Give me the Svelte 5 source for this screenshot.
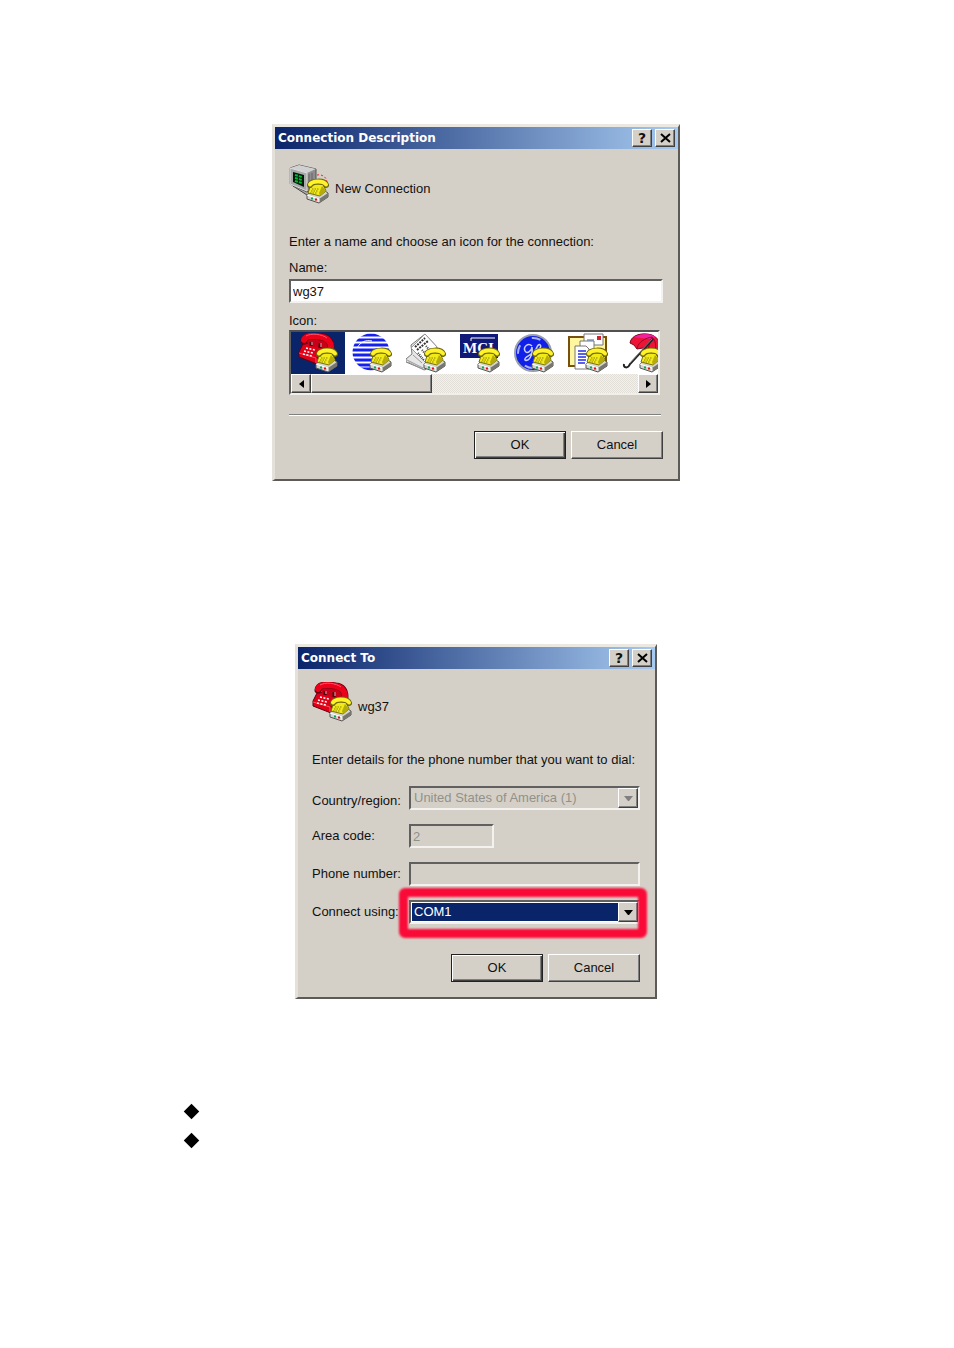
<script>
    let name = "wg37";
    let areaCode = "2";
    let phoneNumber = "";
    let country = "United States of America (1)";
    let port = "COM1";
    let selectedIcon = 0;

    const icons = ["Phone", "Globe", "Newspaper", "MCI", "GE", "Mail", "Umbrella"];
    const ports = ["COM1", "COM2", "TCP/IP (Winsock)"];
    const stripes = [2, 7, 12, 17, 22, 27, 32, 36];
</script>

{#snippet yellowPhone()}
    <path d="M18 31L22 27H36L39 29V33L30 39L18 35Z" fill="#d4d4d0" stroke="#555" />
    <path d="M30 35L39 29V33L30 39Z" fill="#77776f" />
    <path d="M18 31L30 35V38" fill="none" stroke="#fff" />
    <path d="M22 34.5h2" stroke="#0a5" stroke-width="2" />
    <path d="M26 35.5h2" stroke="#e01010" stroke-width="2" />
    <path d="M22 20H34L37 27L31 32L19 29Z" fill="#f2ea18" stroke="#77720c" />
    <path d="M33 22L37 27L31 32L30 29Z" fill="#b5ac0c" />
    <path d="M23 25h7M22 27h7M21 29h7" stroke="#8a8410" stroke-dasharray="1.5 1" />
    <path d="M21 21C22 17 35 16 37 21" fill="none" stroke="#6b6610" stroke-width="6" stroke-linecap="round" />
    <path d="M21 20.500C23 17 34 16 37 20.500" fill="none" stroke="#fff22a" stroke-width="4" stroke-linecap="round" />
{/snippet}

{#snippet redPhone()}
    <path d="M5 11L25 9L31 18L29 23L19 31L1 24V19Z" fill="#e00018" stroke="#600010" />
    <path d="M18 25L29 17V23L19 31Z" fill="#a00020" />
    <path d="M8 5H28L31 18L20 15L10 12Z" fill="#c80018" />
    <path d="M1 20L18 25V30" fill="none" stroke="#ff5060" />
    <path d="M8 15l9 2M6 18l9 2M5 21l9 2" stroke="#fff" stroke-dasharray="2 1.500" stroke-width="1.500" />
    <path d="M13 13V9M22 15V10" stroke="#500010" stroke-width="3" />
    <path d="M14 12V9M23 14V10" stroke="#ffb0b0" />
    <path d="M6 8C7 1 18 3 24 4C31 5 33 10 33 15" fill="none" stroke="#680014" stroke-width="7" stroke-linecap="round" />
    <path d="M6 7C8 1 18 3 24 4C30 5 33 10 33 14" fill="none" stroke="#ec001a" stroke-width="6" stroke-linecap="round" />
    <path d="M8 3C13 0 24 1 29 5" fill="none" stroke="#ff5868" />
{/snippet}

{#snippet art(kind)}
    <svg class="art" viewBox="0 0 40 40" aria-hidden="true">
        {#if kind === "Phone"}
            {@render redPhone()}
        {:else if kind === "Terminal"}
            <path d="M4 22L18 31L31 24L25 19Z" fill="#aaa" stroke="#444" />
            <path d="M1 4L10 1L27 5V22L18 28L1 20Z" fill="#8d8d8d" stroke="#555" />
            <path d="M1 4L10 1L27 5L18 9Z" fill="#d0d0d0" />
            <path d="M1 4L18 9V27L1 20Z" fill="#a9a9a9" stroke="#ddd" />
            <path d="M4 8L15 11V23L4 18Z" fill="#001a0a" />
            <path d="M6 11l7 2M6 14l7 2M6 17l7 2" stroke="#00bd30" stroke-width="2" stroke-dasharray="3 1" />
            <path d="M20 10V26M23 9V24" stroke="#666" />
            <path d="M28 11C33 10 38 13 38 19" fill="none" stroke="#f02030" stroke-dasharray="2 2" />
        {:else if kind === "Globe"}
            <clipPath id="globe"><circle cx="19" cy="19" r="18.500" /></clipPath>
            <g clip-path="url(#globe)">
                {#each stripes as y}
                    <path d="M0 {y}H40" stroke="#1420f0" stroke-width="3" />
                {/each}
                <path d="M5 15C9 8 14 7 20 8" fill="none" stroke="#fff" />
            </g>
        {:else if kind === "Newspaper"}
            <path d="M19 1L31 14V27L19 37L0 29V26L6 21L5 12Z" fill="#e7e7e7" stroke="#777" />
            <path d="M19 1L31 14L19 29L5 15Z" fill="#fff" stroke="#999" />
            <path d="M9 14L19 5M11 17L22 8" stroke="#333" stroke-width="2" stroke-dasharray="2 1" />
            <path d="M12 20l6 7M16 17l6 7M20 13l6 7" stroke="#444" stroke-width="2" stroke-dasharray="1 1" />
            <path d="M1 27L17 35M2 29L18 37M7 22l9 8" stroke="#999" />
        {:else if kind === "MCI"}
            <path d="M0 1H38V25H0Z" fill="#101878" />
            <path d="M11 8V5H35" fill="none" stroke="#fff" />
            <text x="3" y="20" class="mci">MCI</text>
        {:else if kind === "GE"}
            <circle cx="19" cy="20" r="18" fill="#1020e8" stroke="#999fae" stroke-width="2" />
            <circle cx="19" cy="20" r="15" fill="none" stroke="#a8b4ff" stroke-dasharray="9 14" stroke-width="2" />
            <path d="M18 13C14 9 9 14 11 18C13 22 18 17 18 14C19 22 15 29 11 27C9 23 20 23 23 14C25 9 29 13 25 16C21 17 21 21 25 21M25 16C30 15 30 22 25 23" fill="none" stroke="#c9d0ff" stroke-width="1.500" />
        {:else if kind === "Mail"}
            <path d="M1 4H38V33H1Z" fill="#fff6a0" stroke="#775010" stroke-width="2" />
            <path d="M16 1H35V12H16Z" fill="#fff" stroke="#777" />
            <path d="M29 3h4v4h-4z" fill="#d02030" />
            <path d="M19 7h7" stroke="#26d" />
            <path d="M12 8H26V27H12Z" fill="#fff" stroke="#777" />
            <path d="M7 13H18L21 16V36H7Z" fill="#fff" stroke="#777" />
            <path d="M10 18h8M10 21h8M10 24h8M10 27h8M10 30h7" stroke="#2530e0" stroke-width="1.500" />
        {:else if kind === "Umbrella"}
            <path d="M8 10C9 2 20 -1 30 2C40 6 42 20 37 28L32 21L26 20L21 15L15 16L12 12Z" fill="#ee1438" stroke="#780820" />
            <path d="M12 4C19 0 28 0 34 4L27 6Z" fill="#f020a0" />
            <path d="M30 4C24 5 17 8 15 15M30 4C28 9 26 14 26 20M30 4C35 9 34 17 32 20" fill="none" stroke="#a00020" />
            <path d="M31 6L8 31C6 36 1 35 2 31" fill="none" stroke="#222" stroke-width="2" />
            <path d="M30 6L8 30" stroke="#999" stroke-width=".7" />
        {/if}
        {@render yellowPhone()}
    </svg>
{/snippet}

{#snippet titleBar(title)}
    <header>
        <h1>{title}</h1>
        <button class="caption" aria-label="Help">?</button>
        <button class="caption" aria-label="Close">
            <svg width="11" height="10" viewBox="0 0 11 10"><path d="M1 1L10 9M10 1L1 9" stroke="#000" stroke-width="2" /></svg>
        </button>
    </header>
{/snippet}

{#snippet actions()}
    <footer>
        <button class="push default">OK</button>
        <button class="push">Cancel</button>
    </footer>
{/snippet}

<main>
    <section class="dialog description">
        {@render titleBar("Connection Description")}
        <div class="body">
            <div class="heading">
                {@render art("Terminal")}
                <span>New Connection</span>
            </div>
            <p>Enter a name and choose an icon for the connection:</p>
            <label class="name" for="name">Name:</label>
            <input id="name" type="text" bind:value={name}>
            <span class="icon-label" id="icon-label">Icon:</span>
            <div class="list">
                <div class="icons" role="group" aria-labelledby="icon-label">
                    {#each icons as icon, i}
                        <button
                            aria-label={icon}
                            class:selected={i === selectedIcon}
                            on:click={() => selectedIcon = i}
                        >
                            {@render art(icon)}
                        </button>
                    {/each}
                </div>
                <div class="scrollbar">
                    <button class="arrow" aria-label="Scroll left">
                        <svg width="5" height="8" viewBox="0 0 5 8"><path d="M5 0V8L0 4Z" /></svg>
                    </button>
                    <div class="track"><div class="thumb"></div></div>
                    <button class="arrow" aria-label="Scroll right">
                        <svg width="5" height="8" viewBox="0 0 5 8"><path d="M0 0V8L5 4Z" /></svg>
                    </button>
                </div>
            </div>
            <hr>
            {@render actions()}
        </div>
    </section>

    <section class="dialog connect">
        {@render titleBar("Connect To")}
        <div class="body">
            <div class="heading">
                {@render art("Phone")}
                <span>{name}</span>
            </div>
            <p>Enter details for the phone number that you want to dial:</p>
            <div class="fields">
                <label class="low" for="country">Country/region:</label>
                <div class="combo disabled">
                    <select id="country" bind:value={country} disabled>
                        <option>United States of America (1)</option>
                    </select>
                    <span class="drop"><svg width="9" height="5" viewBox="0 0 9 5"><path d="M0 0H9L5 5H4Z" /></svg></span>
                </div>
                <label for="area">Area code:</label>
                <input id="area" class="short" type="text" bind:value={areaCode} disabled>
                <label for="phone">Phone number:</label>
                <input id="phone" type="text" bind:value={phoneNumber} disabled>
                <label for="port">Connect using:</label>
                <div class="combo marked">
                    <select id="port" bind:value={port}>
                        {#each ports as item}
                            <option>{item}</option>
                        {/each}
                    </select>
                    <span class="drop"><svg width="9" height="5" viewBox="0 0 9 5"><path d="M0 0H9L5 5H4Z" /></svg></span>
                </div>
            </div>
            {@render actions()}
        </div>
    </section>

    <ul>
        <li></li>
        <li></li>
    </ul>
</main>

<style>
    :global(body) {
        background: #fff;
    }

    main {
        --face: #d4d0c8;
        --navy: #0a246a;
        --shadow: #808080;
        padding: 124px 2px 0 0;
        color: #111;
        font: 13px/18px "Liberation Sans", Arial, sans-serif;
    }

    button, input, select {
        box-sizing: border-box;
        margin: 0;
        border-radius: 0;
        font: inherit;
        color: inherit;
    }

    .dialog {
        box-sizing: border-box;
        width: 100%;
        margin: 0 auto;
        background: var(--face);
        border: solid;
        border-width: 3px 2px 2px 3px;
        border-color: #ebe8e2 #5c5b58 #5c5b58 #e4e1db;
    }

    .description {
        max-width: 408px;
    }

    .connect {
        max-width: 362px;
        margin-top: 163px;
    }

    header {
        display: flex;
        align-items: center;
        gap: 3px;
        height: 22px;
        padding: 0 3px;
        background: linear-gradient(to right, var(--navy), #a6caf0);
    }

    h1 {
        flex: 1;
        margin: 0;
        color: #fff;
        font: bold 12px/22px "DejaVu Sans", sans-serif;
    }

    .caption, .arrow, .drop, .push, .thumb {
        display: flex;
        align-items: center;
        justify-content: center;
        padding: 0;
        background: var(--face);
        border: 1px solid;
        border-color: #fff #404040 #404040 #fff;
        box-shadow: inset -1px -1px var(--shadow);
    }

    .caption {
        width: 20px;
        height: 18px;
        font: bold 14px/14px "DejaVu Sans", sans-serif;
    }

    .body {
        display: flex;
        flex-direction: column;
        padding: 15px 15px 20px 14px;
    }

    .connect .body {
        padding-top: 13px;
        padding-bottom: 15px;
    }

    .heading {
        display: flex;
        align-items: center;
        gap: 6px;
    }

    .heading span {
        padding-top: 10px;
    }

    .art {
        display: block;
        flex: none;
        width: 40px;
        height: 40px;
    }

    .mci {
        font: bold 15px "Liberation Serif", serif;
        fill: #fff;
    }

    p {
        margin: 29px 0 0;
        white-space: nowrap;
    }

    .name {
        margin: 8px 0 2px;
    }

    input {
        width: 100%;
        height: 24px;
        padding: 0 2px;
        background: #fff;
        border: 2px solid;
        border-color: #606060 #f4f2ee #f4f2ee #606060;
    }

    input:disabled {
        background: var(--face);
        color: #929089;
    }

    .icon-label {
        margin-top: 9px;
    }

    .list {
        margin-right: 3px;
        background: #fff;
        border: 2px solid;
        border-color: #505050 #f1efea #f1efea #606060;
    }

    .icons {
        display: flex;
        overflow: hidden;
    }

    .icons button {
        flex: none;
        width: 54px;
        height: 42px;
        padding: 1px 7px;
        background: #fff;
        border: 0;
    }

    .icons .selected {
        background: var(--navy);
    }

    .scrollbar {
        display: flex;
        height: 19px;
    }

    .arrow {
        flex: none;
        width: 20px;
    }

    .track {
        flex: 1;
        background: repeating-conic-gradient(#e2dfd9 0 25%, #f3f1ed 0 50%) 0 0 / 2px 2px;
    }

    .thumb {
        box-sizing: border-box;
        width: 37%;
        height: 100%;
    }

    hr {
        width: calc(100% - 2px);
        margin: 19px 0 0;
        border: 0;
        border-top: 1px solid var(--shadow);
        border-bottom: 1px solid #fff;
    }

    footer {
        display: flex;
        justify-content: flex-end;
        gap: 5px;
        margin-top: 15px;
    }

    .connect footer {
        margin-top: 30px;
    }

    .push {
        width: 92px;
        height: 28px;
    }

    .default {
        border-color: #222;
        box-shadow: inset 1px 1px #fff, inset -1px -1px #404040, inset -2px -2px var(--shadow);
    }

    .fields {
        display: grid;
        grid-template-columns: 97px 1fr;
        grid-auto-rows: 24px;
        row-gap: 14px;
        align-items: center;
        margin-top: 17px;
    }

    .fields label {
        white-space: nowrap;
    }

    .fields .low {
        align-self: end;
    }

    .short {
        width: 85px;
    }

    .combo {
        position: relative;
        box-sizing: border-box;
        height: 24px;
        border: 2px solid;
        border-color: #606060 #f4f2ee #f4f2ee #606060;
    }

    select {
        display: block;
        width: 100%;
        height: 20px;
        padding: 0 21px 0 2px;
        appearance: none;
        background: var(--navy);
        border: 1px solid #fff;
        color: #fff;
    }

    select:disabled {
        background: var(--face);
        border-color: var(--face);
        color: #929089;
        opacity: 1;
    }

    .drop {
        position: absolute;
        top: 0;
        right: 0;
        box-sizing: border-box;
        width: 20px;
        height: 20px;
        pointer-events: none;
    }

    .disabled .drop {
        fill: var(--shadow);
    }

    /* red marker drawn round the port field */
    .marked::after {
        content: "";
        position: absolute;
        inset: -14px -9px -16px -12px;
        border: 9px solid #fa0a37;
        border-radius: 6px;
        filter: blur(1px);
        pointer-events: none;
    }

    ul {
        margin: 98px 0 0;
        padding: 0 0 0 186px;
        list-style: none;
    }

    li {
        display: flex;
        align-items: center;
        height: 29px;
    }

    li::before {
        content: "";
        width: 11px;
        height: 11px;
        background: #000;
        transform: rotate(45deg);
    }
</style>
